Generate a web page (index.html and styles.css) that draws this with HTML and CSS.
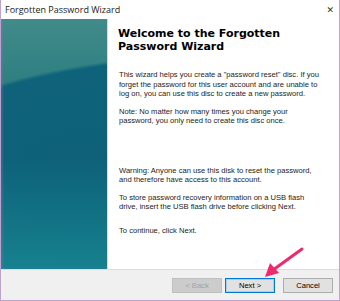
FILE: index.html
```html
<!DOCTYPE html>
<html lang="en">
<head>
  <meta charset="UTF-8" />
  <title>Forgotten Password Wizard</title>
  <link rel="stylesheet" href="styles.css">
</head>
<body>

  <div class="window">
    <div class="titlebar">
      <span class="title">Forgotten Password Wizard</span>
      <span class="close">&#x2715;</span>
    </div>

    <div class="main">
      <div class="side"></div>
      <div class="content">
        <h1>Welcome to the Forgotten<br>Password Wizard</h1>

        <p class="intro">This wizard helps you create a "password reset" disc. If you<br>
        forget the password for this user account and are unable to<br>
        log on, you can use this disc to create a new password.</p>

        <p>Note: No matter how many times you change your<br>
        password, you only need to create this disc once.</p>

        <p class="warning">Warning: Anyone can use this disk to reset the password,<br>
        and therefore have access to this account.</p>

        <p>To store password recovery information on a USB flash<br>
        drive, insert the USB flash drive before clicking Next.</p>

        <p class="last">To continue, click Next.</p>
      </div>
    </div>

    <div class="footer">
      <button class="btn" disabled>&lt; Back</button>
      <button class="btn next">Next &gt;</button>
      <button class="btn cancel">Cancel</button>
    </div>

    <!-- arrow pointing at Next -->
    <svg class="arrow" width="50" height="34" viewBox="0 0 50 34">
      <path d="M43 3 L14 24" stroke="#ec2a6e" stroke-width="3" stroke-linecap="round" fill="none"/>
      <path d="M6 31 L11 17 L20 27 Z" fill="#ec2a6e"/>
    </svg>
  </div>

</body>
</html>
```

FILE: styles.css
```css
* {
  box-sizing: border-box;
}

body {
  margin: 0;
  background: #ffffff;
  font-family: 'Liberation Sans', Arial, sans-serif;
  color: #000000;
}

.window {
  position: relative;
  width: 340px;
  height: 301px;
  display: flex;
  flex-direction: column;
  border: 1px solid #bda3cf;
  border-top: none;
  background: #ffffff;
}

.titlebar {
  height: 19px;
  display: flex;
  align-items: center;
  justify-content: space-between;
  padding: 0 4px 0 4px;
  background: #ffffff;
}

.title {
  font-family: 'Open Sans', sans-serif;
  font-size: 9px;
  color: #1a1a1a;
}

.close {
  font-family: 'DejaVu Sans', sans-serif;
  font-size: 9px;
  color: #333333;
  margin-right: 1px;
}

.main {
  flex: 1;
  display: flex;
}

.side {
  width: 107px;
  background:
    linear-gradient(180deg, rgba(26, 140, 150, 0) 55%, rgba(26, 140, 150, 0.75) 100%),
    radial-gradient(ellipse 417px 195px at 220px 230px, #0c5f78 0%, #0e6279 98%, rgba(14, 98, 121, 0) 100%),
    linear-gradient(180deg, #418b89 0%, #2f7f82 25%, #1f7a80 100%);
  border-right: 1px solid #cfdfe0;
  box-shadow: inset 2px 0 2px rgba(150, 110, 170, 0.35);
}

.content {
  flex: 1;
  padding: 9px 0 0 10px;
  font-size: 7.6px;
  line-height: 9.5px;
  color: #1c1c1c;
  white-space: nowrap;
}

h1 {
  margin: 0 0 17px 0;
  font-family: 'DejaVu Sans', Verdana, sans-serif;
  font-size: 11px;
  line-height: 12.5px;
  font-weight: bold;
  color: #000000;
}

p {
  margin: 0 0 8px 1px;
}

.warning {
  margin-top: 40px;
}

.last {
  margin-top: 14px;
}

.footer {
  height: 31px;
  background: #f0f0f0;
  border-top: 1px solid #dcdcdc;
  display: flex;
  align-items: center;
  justify-content: flex-end;
  padding: 0 6px 0 0;
  gap: 3px;
}

.btn {
  width: 50px;
  height: 15px;
  padding: 0;
  font-family: 'Liberation Sans', Arial, sans-serif;
  font-size: 7.6px;
  color: #000000;
  background: #e1e1e1;
  border: 1px solid #adadad;
}

.btn:disabled {
  color: #a3a3a3;
  background: #cccccc;
  border-color: #bfbfbf;
}

.next {
  border: 1px solid #0078d7;
  box-shadow: inset 0 0 0 1px #a9cdeb;
}

.cancel {
  margin-left: 5px;
}

.arrow {
  position: absolute;
  left: 258px;
  top: 246px;
}
```
